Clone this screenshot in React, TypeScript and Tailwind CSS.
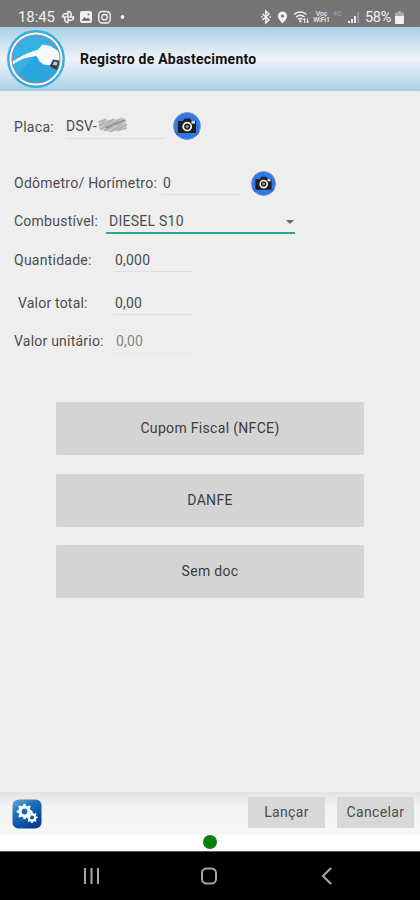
import React from "react";

const CameraIcon = ({ className }: { className: string }) => (
    <svg viewBox="0 0 28 28" className={className}>
        <circle cx="14" cy="14" r="13.4" fill="#2f78ec" stroke="#7d92b5" strokeWidth="1" />
        <path d="M2 19.5a13 13 0 0 0 3 4M26 19.5a13 13 0 0 1-3 4" stroke="#1f3f78" strokeWidth="0.9" fill="none" />
        <path d="M5 9h5l1.6-2.500h5.600L18.800 9H23v12H5z" fill="#1f1f1f" />
        <circle cx="14.2" cy="14.6" r="4" fill="#222" stroke="#f2f2f2" strokeWidth="1.8" />
        <circle cx="14.2" cy="14.6" r="1.6" fill="#8d8d8d" />
        <path d="M18.5 9.2H22v2.3h-3.5z" fill="#f2f2f2" />
    </svg>
);

const NozzleLogo = () => (
    <svg viewBox="0 0 58 58" className="h-[58px] w-[58px] shrink-0">
        <defs>
            <clipPath id="disc">
                <circle cx="29" cy="29" r="23.5" />
            </clipPath>
        </defs>
        <circle cx="29" cy="29" r="27.7" fill="#fff" stroke="#36afe0" strokeWidth="2.4" />
        <circle cx="29" cy="29" r="24" fill="#35b1e4" stroke="#7f929c" strokeWidth="1.2" />
        <g clipPath="url(#disc)">
            <path d="M28 26 10 45l17 10 22-6 1-13-10-5z" fill="#2ba5de" />
            <path
                d="M4 33c5-3.500 10-7 16-9.500l11-4 4.500-5 8 1.500 6 4 7 4.500v8l-5 0-5-2-4 5-6-1-4-3-3-5.500c-9 1-17 3-25.500 10z"
                fill="#f7fbfd"
            />
            <path d="m46 29.500 6.500 1-1.500 9-8-3.500z" fill="#3b444b" />
            <path d="m47.5 31.500 3 1-1 3-4-1z" fill="#c3d6e0" />
            <path d="m43 35.500 8 4" stroke="#333" strokeWidth="1.4" />
        </g>
    </svg>
);

const Gear = ({ cx, cy, r }: { cx: number; cy: number; r: number }) => (
    <g transform={`translate(${cx} ${cy}) scale(${r})`}>
        <circle r="0.57" fill="none" stroke="#fff" strokeWidth="0.4" />
        {[0, 45, 90, 135, 180, 225, 270, 315].map((angle) => (
            <path
                key={angle}
                d="M-.2-.65-.14-1h.28l.06.35z"
                fill="#fff"
                transform={`rotate(${angle})`}
            />
        ))}
    </g>
);

const SettingsIcon = () => (
    <svg viewBox="0 0 30 30" className="h-[30px] w-[30px]">
        <defs>
            <linearGradient id="blue" x1="0" y1="0" x2="0.6" y2="1">
                <stop offset="0" stopColor="#71a9d3" />
                <stop offset="0.4" stopColor="#1c72b9" />
                <stop offset="1" stopColor="#063f94" />
            </linearGradient>
        </defs>
        <rect x="0.5" y="0.5" width="29" height="29" rx="6" fill="url(#blue)" />
        <Gear cx={12.5} cy={12.5} r={7.8} />
        <Gear cx={20} cy={18.5} r={5.6} />
    </svg>
);

const StatusBar = () => (
    <div className="flex h-[27px] items-end justify-between bg-[#757575] pr-[16px] pl-[18px] text-[14px] leading-5 text-[#f0f0f0]">
        <div className="flex h-5 items-center">
            <span className="w-[38px] text-[15px] tracking-[-0.1px]">18:45</span>
            <svg viewBox="0 0 70 16" className="ml-[4px] h-4 w-[70px]" fill="none" stroke="#f0f0f0">
                <path
                    d="M8 8V2.500a3 3 0 0 1 2 5.500h3.500a3 3 0 0 1-5.500 2v3.500a3 3 0 0 1-2-5.500H2.500A3 3 0 0 1 8 6"
                    strokeWidth="1.4"
                />
                <rect x="20" y="2" width="12" height="12" rx="2" fill="#f0f0f0" stroke="none" />
                <path d="m21.5 11.800 3-3.800 2 2 1.500-1.500 2.500 3.300z" fill="#666" stroke="none" />
                <circle cx="28.5" cy="5.5" r="1" fill="#666" stroke="none" />
                <rect x="38.700" y="2.5" width="11.5" height="11.5" rx="3.5" strokeWidth="1.4" />
                <circle cx="44.5" cy="8.2" r="2.7" strokeWidth="1.3" />
                <circle cx="47.6" cy="5" r="0.6" fill="#f0f0f0" stroke="none" />
                <circle cx="62.5" cy="8" r="1.9" fill="#f0f0f0" stroke="none" />
            </svg>
        </div>
        <div className="flex h-5 items-center">
            <svg viewBox="0 0 50 16" className="h-4 w-[50px]" fill="none" stroke="#f0f0f0">
                <path d="m1.500 5 6.500 6-3.200 2.800V2.200L8 5l-6.500 6M0 8h1.500m7 0H10" strokeWidth="1.5" />
                <path
                    d="M21.5 2.500a4.600 4.600 0 0 0-4.600 4.600c0 3.200 4.600 7.400 4.600 7.400s4.600-4.200 4.600-7.400a4.600 4.600 0 0 0-4.600-4.600z"
                    fill="#f0f0f0"
                    stroke="none"
                />
                <circle cx="21.5" cy="7" r="1.6" fill="#757575" stroke="none" />
                <path d="M33 5.500c3.500-3.300 9-3.300 12.500 0M35 8c2.500-2.200 6-2.200 8.500 0M37.200 10.300c1.200-1 3-1 4.200 0" strokeWidth="1.5" />
                <circle cx="39.3" cy="12.3" r="1.2" fill="#f0f0f0" stroke="none" />
                <path d="M43.500 14V9.500m3 0V14m-4.300-3 1.300-1.500 1.200 1.500m.6 1.300 1.200 1.700 1.200-1.700" strokeWidth="0.9" />
            </svg>
            <span className="ml-[2px] w-[17px] text-center text-[7px] leading-[6px] font-bold tracking-[-0.2px] text-[#dcdcdc]">
                Voc WiFi1
            </span>
            <span className="ml-[3px] w-[10px] pb-[6px] text-[7px] leading-3 text-[#a8a8a8]">4G</span>
            <svg viewBox="0 0 14 14" className="ml-[4px] h-[14px] w-[14px]">
                <path d="M1 11h2v2H1zm3-2h2v4H4zm3-3h2v7H7z" fill="#e8e8e8" />
                <path d="M10.5 2h1.500v11h-1.500z" fill="#9b9b9b" />
            </svg>
            <span className="ml-[4px] w-[29px] pt-px text-[14.5px] tracking-[-0.3px]">58%</span>
            <svg viewBox="0 0 9 13" className="ml-px h-[13px] w-[9px]">
                <path d="M3 0h3v1.500h2A1 1 0 0 1 9 2.500V5H0V2.500a1 1 0 0 1 1-1h2z" fill="#aaa" />
                <path d="M0 5h9v7a1 1 0 0 1-1 1H1a1 1 0 0 1-1-1z" fill="#f0f0f0" />
            </svg>
        </div>
    </div>
);

const Header = () => (
    <header className="flex h-16 items-center bg-linear-to-b from-[#a9d0e7] via-[#f1f3f8] to-[#a9d0e7] pl-[7px]">
        <NozzleLogo />
        <h1 className="ml-[15px] text-[14px] font-bold tracking-[0.23px] text-[#111]">
            Registro de Abastecimento
        </h1>
    </header>
);

const DocButton = ({ label }: { label: string }) => (
    <button className="h-[53px] w-full rounded-[2px] bg-[#d4d4d4] text-[14px] tracking-[0.32px] text-[#3c3c3c]">
        {label}
    </button>
);

const App = () => {
    return (
        <div className="flex h-[900px] w-[420px] flex-col overflow-hidden bg-[#eeeeee] font-['Roboto',sans-serif] text-[14px] text-[#4c4c4c]">
            <StatusBar />
            <Header />

            <main className="flex grow flex-col pt-[21px]">
                <div className="flex h-[28px] items-center pl-[14px]">
                    <span className="w-[52px] pt-[2px] tracking-[0.3px]">Placa:</span>
                    <div className="flex h-[27px] w-[99px] items-center self-start border-b border-[#dedede]">
                        <span className="pt-[2px] tracking-[0.2px]">DSV-</span>
                        <svg viewBox="0 0 32 18" className="h-[18px] w-8" fill="none">
                            <path d="m2 5 26-3 2 11-18 3-10-3z" fill="#c9c9c9" />
                            <path
                                d="M1 6 9 3 2 10 17 3 3 14 25 2 7 15 29 4 13 16 30 8 20 15 30 12"
                                stroke="#b0b0b0"
                                strokeWidth="1.3"
                            />
                            <path d="m9 12 18-8" stroke="#777" />
                        </svg>
                    </div>
                    <CameraIcon className="ml-[8px] h-7 w-7" />
                </div>

                <div className="mt-[31px] flex h-6 items-center pl-[14px]">
                    <span className="w-[147px] tracking-[0.25px]">Odômetro/ Horímetro:</span>
                    <div className="flex h-full w-20 items-center border-b border-[#dedede] pt-px pl-[2px]">0</div>
                    <CameraIcon className="ml-[10px] h-[25px] w-[25px]" />
                </div>

                <div className="mt-[14px] flex h-[25px] items-center pl-[14px]">
                    <span className="w-[92px] pb-px tracking-[0.25px]">Combustível:</span>
                    <div className="flex h-full w-[189px] items-center justify-between border-b-2 border-[#2fa692] pt-[2px] pl-[3px]">
                        <span className="tracking-[0.25px]">DIESEL S10</span>
                        <svg viewBox="0 0 8 4" className="mr-px h-1 w-2" fill="#666">
                            <path d="M0 0h8L4 4z" />
                        </svg>
                    </div>
                </div>

                <div className="mt-[14px] flex h-6 items-center pl-[14px]">
                    <span className="w-[99px] tracking-[0.25px]">Quantidade:</span>
                    <div className="flex h-full w-[79px] items-center border-b border-[#dedede] pt-[2px] pl-[2px] tracking-[0.2px]">
                        0,000
                    </div>
                </div>

                <div className="mt-[19px] flex h-6 items-center pl-[18px]">
                    <span className="w-[95px] tracking-[0.2px]">Valor total:</span>
                    <div className="flex h-full w-[79px] items-center border-b border-[#dedede] pt-[2px] pl-[2px] tracking-[0.2px]">
                        0,00
                    </div>
                </div>

                <div className="mt-[15px] flex h-6 items-center pl-[14px]">
                    <span className="w-[99px] pb-[2px] tracking-[0.22px]">Valor unitário:</span>
                    <div className="flex h-full w-[79px] items-center border-b border-[#e7e7e7] pl-[3px] tracking-[0.2px] text-[#858585]">
                        0,00
                    </div>
                </div>

                <div className="mt-[48px] flex flex-col gap-[18.5px] px-14">
                    <DocButton label="Cupom Fiscal (NFCE)" />
                    <DocButton label="DANFE" />
                    <DocButton label="Sem doc" />
                </div>
            </main>

            <footer className="flex h-[43px] shrink-0 items-center bg-linear-to-b from-[#e4e4e4] via-[#f3f3f3] via-35% to-[#f7f7f7] pr-[6px] pl-[12px]">
                <SettingsIcon />
                <div className="ml-auto flex gap-3 pb-[3px] text-[14px] tracking-[0.35px]">
                    <button className="h-[31px] w-[77px] bg-[#d8d8d8]">Lançar</button>
                    <button className="h-[31px] w-[77px] bg-[#d8d8d8]">Cancelar</button>
                </div>
            </footer>

            <div className="flex h-4 shrink-0 justify-center bg-white">
                <span className="h-[14px] w-[14px] rounded-full bg-[#0a810a]" />
            </div>

            <nav className="flex h-[49px] shrink-0 items-center justify-center border-t border-[#555] bg-black">
                <svg viewBox="0 0 260 24" className="h-6 w-[260px]" fill="none" stroke="#a8a8a8" strokeWidth="2">
                    <path d="M5 4v16m6.500-16v16m6.500-16v16" />
                    <rect x="122" y="4.5" width="14" height="15" rx="4.5" />
                    <path d="m251 4-8 8 8 8" />
                </svg>
            </nav>
        </div>
    );
};

export default App;
